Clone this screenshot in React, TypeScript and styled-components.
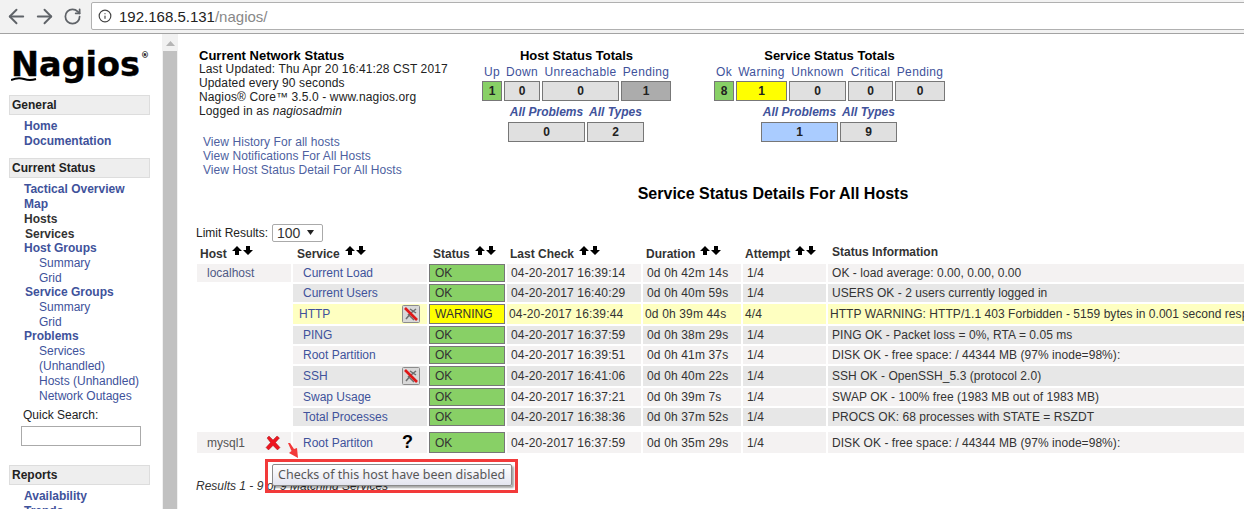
import React from 'react';

import { ArrowLeft, ArrowRight, Info, RotateCw } from 'lucide-react';
import styled, { createGlobalStyle } from 'styled-components';

const LINK_COLOR = '#40529b';
const TEXT_COLOR = '#333';

const GlobalStyle = createGlobalStyle`
  html, body {
    margin: 0;
    padding: 0;
    width: 1244px;
    height: 509px;
    overflow: hidden;
    background: #fff;
    font-family: "Liberation Sans", Arial, sans-serif;
    font-size: 12px;
    color: #000;
  }
`;

const Page = styled.div`
  position: relative;
  width: 1244px;
  height: 509px;
  overflow: hidden;
  display: flex;
  flex-direction: column;
`;

const Toolbar = styled.div`
  flex: 0 0 34px;
  box-sizing: border-box;
  height: 34px;
  display: flex;
  align-items: flex-start;
  background: #f2f2f2;
  border-bottom: 1px solid #a3a3a3;
  padding: 2px 0 0 2px;
  color: #5f6368;
`;

const NavButton = styled.div`
  width: 28px;
  height: 28px;
  display: flex;
  align-items: center;
  justify-content: center;
`;

const AddressBar = styled.div`
  box-sizing: border-box;
  flex: 1;
  margin: 0 -10px 0 5px;
  height: 28px;
  background: #fff;
  border: 1px solid #b0b0b0;
  border-radius: 2px;
  display: flex;
  align-items: center;
  padding-left: 6px;
  gap: 7px;
  font-size: 15px;
  color: #888;
`;

const Host = styled.span`
  color: #222;
`;

const Content = styled.div`
  flex: 1;
  display: flex;
  min-height: 0;
`;

const Sidebar = styled.div`
  flex: 0 0 162px;
  box-sizing: border-box;
  padding: 16px 12px 0 9px;
  overflow: hidden;
`;

const Logo = styled.div`
  position: relative;
  height: 45px;
  padding-left: 2px;
  font-family: "DejaVu Sans", sans-serif;
  font-weight: 700;
  font-size: 33.5px;
  line-height: 30px;
  color: #000;
  -webkit-text-stroke: 0.4px #000;
`;

const Registered = styled.sup`
  position: absolute;
  left: 132px;
  top: 2px;
  font-size: 8px;
  line-height: 8px;
  -webkit-text-stroke: 0;
`;

const Swoosh = styled.svg`
  position: absolute;
  left: 2px;
  top: 27px;
`;

const SectionHeader = styled.div`
  box-sizing: border-box;
  height: 20px;
  line-height: 18px;
  padding-left: 2px;
  background: #eee;
  border: 1px solid #ddd;
  font-weight: 700;
  color: #222;
  width: 141px;
`;

const NavList = styled.div<{ $isTight?: boolean }>`
  padding: 4px 0 0 15px;
  margin-bottom: ${(props) => (props.$isTight ? 0 : 9)}px;
`;

const NavItem = styled.div<{ $dark?: boolean; $nudge?: boolean; $short?: boolean }>`
  height: ${(props) => (props.$short ? 14 : 15)}px;
  line-height: 15px;
  font-weight: 700;
  white-space: nowrap;
  color: ${(props) => (props.$dark ? '#333' : LINK_COLOR)};
  padding-left: ${(props) => (props.$nudge ? 1 : 0)}px;
`;

const SubItem = styled.div<{ $short?: boolean }>`
  height: ${(props) => (props.$short ? 14 : 15)}px;
  line-height: 15px;
  padding-left: 15px;
  white-space: nowrap;
  color: ${LINK_COLOR};
`;

const SearchLabel = styled.div`
  padding: 4px 0 0 14px;
  line-height: 15px;
  color: #222;
`;

const SearchInput = styled.input`
  display: block;
  box-sizing: border-box;
  width: 120px;
  height: 20px;
  margin: 3px 0 19px 12px;
  border: 1px solid #aaa;
  background: #fff;
  padding: 0;
`;

const ScrollTrack = styled.div`
  flex: 0 0 16px;
  background: #f1f1f1;
  display: flex;
  flex-direction: column;
  align-items: center;
  padding-top: 7px;
  box-sizing: border-box;
`;

const ScrollArrow = styled.svg`
  display: block;
  margin-bottom: 5px;
`;

const ScrollThumb = styled.div`
  width: 14px;
  flex: 1;
  background: #c1c1c1;
`;

const Main = styled.div`
  flex: 1;
  min-width: 0;
  overflow: hidden;
  padding: 14px 0 0 18px;
`;

const TopSection = styled.div`
  display: flex;
  padding-left: 3px;
`;

const InfoColumn = styled.div`
  flex: 0 0 283px;
  line-height: 14px;
  letter-spacing: 0.12px;
  color: #222;
`;

const InfoTitle = styled.div`
  font-weight: 700;
  font-size: 13px;
  line-height: 16px;
  height: 14px;
  letter-spacing: 0;
  color: #000;
`;

const InfoLinks = styled.div`
  margin-top: 17px;
  padding-left: 4px;
  color: #4e5f9f;
  letter-spacing: 0.06px;
`;

const TotalsGroup = styled.div<{ $gap?: number }>`
  margin-left: ${(props) => props.$gap ?? 0}px;
  text-align: center;
`;

const TotalsTitle = styled.div`
  font-weight: 700;
  font-size: 13px;
  line-height: 16px;
  height: 14px;
  margin-bottom: 3px;
`;

const TotalsGrid = styled.div<{ $columns: string; $offset?: number }>`
  display: grid;
  grid-template-columns: ${(props) => props.$columns};
  column-gap: 2px;
  margin-left: ${(props) => props.$offset ?? 0}px;
`;

const TotalsLabel = styled.div<{ $italic?: boolean }>`
  color: ${LINK_COLOR};
  white-space: nowrap;
  line-height: 14px;
  font-style: ${(props) => (props.$italic ? 'italic' : 'normal')};
  font-weight: ${(props) => (props.$italic ? 700 : 400)};
  letter-spacing: ${(props) => (props.$italic ? 0 : 0.35)}px;
  margin-bottom: ${(props) => (props.$italic ? 3 : 2)}px;
  margin-top: ${(props) => (props.$italic ? 4 : 0)}px;
`;

const TotalsCell = styled.div<{ $color?: string }>`
  box-sizing: border-box;
  height: 20px;
  line-height: 18px;
  text-align: center;
  font-weight: 700;
  color: #222;
  background: ${(props) => props.$color ?? '#e0e0e0'};
  border: 1px solid #777;
`;

const PageTitle = styled.div`
  text-align: center;
  width: 1154px;
  font-size: 16px;
  font-weight: 700;
  line-height: 18px;
  margin-top: 8px;
`;

const LimitRow = styled.div`
  display: flex;
  align-items: center;
  gap: 4px;
  margin-top: 21px;
  height: 18px;
  color: #222;
`;

const LimitSelect = styled.div`
  position: relative;
  box-sizing: border-box;
  width: 51px;
  height: 18px;
  border: 1px solid #aaa;
  border-radius: 2px;
  padding-left: 4px;
  font-size: 14px;
  line-height: 16px;
  color: ${TEXT_COLOR};
`;

const SelectArrow = styled.svg`
  position: absolute;
  right: 7px;
  top: 5px;
`;

const Table = styled.div`
  width: 1060px;
  margin-top: 2px;
`;

const GRID_COLUMNS = '94px 134px 76px 134px 98px 83px 1fr';

const HeaderRow = styled.div`
  display: grid;
  grid-template-columns: ${GRID_COLUMNS};
  column-gap: 2px;
  height: 18px;
  margin-bottom: 2px;
  margin-left: 1px;
`;

const HeaderCell = styled.div<{ $indent?: number }>`
  border-bottom: 2px solid #777;
  box-sizing: border-box;
  font-weight: 700;
  color: #333;
  white-space: nowrap;
  line-height: 21px;
  padding-left: ${(props) => props.$indent ?? 3}px;
  display: flex;
  align-items: flex-start;
`;

const InfoHeaderCell = styled(HeaderCell)`
  line-height: 17px;
`;

const SortArrows = styled.svg`
  margin: 2px 0 0 5px;
  flex: none;
`;

const Row = styled.div<{ $height: number; $top: number }>`
  display: grid;
  grid-template-columns: ${GRID_COLUMNS};
  column-gap: 2px;
  height: ${(props) => props.$height}px;
  margin-top: ${(props) => props.$top}px;
  margin-left: 1px;
`;

const Cell = styled.div<{ $bg?: string; $indent: number }>`
  box-sizing: border-box;
  background: ${(props) => props.$bg ?? 'transparent'};
  padding-left: ${(props) => props.$indent}px;
  color: ${TEXT_COLOR};
  white-space: nowrap;
  overflow: hidden;
  display: flex;
  align-items: center;
  letter-spacing: 0.15px;
`;

const InfoCell = styled(Cell)`
  letter-spacing: 0.05px;
`;

const LinkCell = styled(Cell)`
  color: ${LINK_COLOR};
  justify-content: space-between;
  padding-right: 7px;
  letter-spacing: 0;
  overflow: visible;
`;

const StatusCell = styled.div<{ $warning: boolean }>`
  box-sizing: border-box;
  display: flex;
  align-items: center;
  background: ${(props) => (props.$warning ? '#ffff00' : '#88d066')};
  border: 1px solid #777;
  padding-left: 5px;
  color: ${TEXT_COLOR};
`;

const HostName = styled.span<{ $isDisabled: boolean }>`
  color: ${(props) => (props.$isDisabled ? '#555' : '#505a85')};
`;

const HostCell = styled(Cell)`
  justify-content: space-between;
  padding-right: 10px;
  overflow: visible;
  letter-spacing: 0;
`;

const QuestionMark = styled.span`
  color: #000;
  font-size: 18px;
  font-weight: 700;
  margin-right: 7px;
`;

const ResultsLine = styled.div`
  font-style: italic;
  margin-top: 27px;
  color: #333;
  line-height: 14px;
`;

const CalloutBox = styled.div`
  position: absolute;
  left: 265px;
  top: 459px;
  width: 253px;
  height: 34px;
  box-sizing: border-box;
  border: 3px solid #f23a3a;
`;

const Tooltip = styled.div`
  position: absolute;
  left: 272px;
  top: 464px;
  width: 240px;
  height: 22px;
  box-sizing: border-box;
  border: 1px solid #8a8a8a;
  border-radius: 2px;
  background: linear-gradient(#ffffff, #e4e5f0);
  box-shadow: 2px 2px 2px rgba(0, 0, 0, 0.35);
  font-family: "Noto Sans", sans-serif;
  font-size: 12.5px;
  line-height: 19px;
  padding-left: 5px;
  color: #575757;
  white-space: nowrap;
`;

const CalloutArrow = styled.svg`
  position: absolute;
  left: 286px;
  top: 443px;
`;

const SortIcon = (): React.ReactElement => (
  <SortArrows width="22" height="10" viewBox="0 0 22 10">
    <path d="M5 0 L10 5 L7 5 L7 9 L3 9 L3 5 L0 5 Z" fill="#000" />
    <path d="M14 0 L18 0 L18 4 L21 4 L16 9 L11 4 L14 4 Z" fill="#000" />
  </SortArrows>
);

const DisabledIcon = (): React.ReactElement => (
  <svg width="18" height="18" viewBox="0 0 18 18">
    <rect x="0.5" y="0.5" width="17" height="17" rx="1" fill="#d8d8d8" stroke="#8c8c8c" />
    <path d="M4 14 L9 8 L14 4 M8 4 L14 8 M6 9 L12 15" stroke="#6e6e6e" strokeWidth="1.5" fill="none" />
    <path d="M3 3 L15 15" stroke="#e01818" strokeWidth="2.6" />
  </svg>
);

const CrossIcon = (): React.ReactElement => (
  <svg width="16" height="16" viewBox="0 0 16 16">
    <path d="M2 3 L4 1 L8 5 L12 1 L14.5 3 L10.5 7.5 L15 12.5 L12.5 15 L8 10.5 L3.5 15 L1 12.5 L5.5 7.5 Z" fill="#ee1520" stroke="#8a1010" strokeWidth="0.4" />
  </svg>
);

interface IServiceRow {
  host?: string;
  service: string;
  status: string;
  lastCheck: string;
  duration: string;
  attempt: string;
  info: string;
  icon?: 'disabled' | 'unknown';
  height: number;
  top: number;
}

const ROWS: IServiceRow[] = [
  { host: 'localhost', service: 'Current Load', status: 'OK', lastCheck: '04-20-2017 16:39:14', duration: '0d 0h 42m 14s', attempt: '1/4', info: 'OK - load average: 0.00, 0.00, 0.00', height: 18, top: 0 },
  { service: 'Current Users', status: 'OK', lastCheck: '04-20-2017 16:40:29', duration: '0d 0h 40m 59s', attempt: '1/4', info: 'USERS OK - 2 users currently logged in', height: 18, top: 2 },
  { service: 'HTTP', status: 'WARNING', lastCheck: '04-20-2017 16:39:44', duration: '0d 0h 39m 44s', attempt: '4/4', info: 'HTTP WARNING: HTTP/1.1 403 Forbidden - 5159 bytes in 0.001 second response time', icon: 'disabled', height: 20, top: 2 },
  { service: 'PING', status: 'OK', lastCheck: '04-20-2017 16:37:59', duration: '0d 0h 38m 29s', attempt: '1/4', info: 'PING OK - Packet loss = 0%, RTA = 0.05 ms', height: 18, top: 2 },
  { service: 'Root Partition', status: 'OK', lastCheck: '04-20-2017 16:39:51', duration: '0d 0h 41m 37s', attempt: '1/4', info: 'DISK OK - free space: / 44344 MB (97% inode=98%):', height: 18, top: 2 },
  { service: 'SSH', status: 'OK', lastCheck: '04-20-2017 16:41:06', duration: '0d 0h 40m 22s', attempt: '1/4', info: 'SSH OK - OpenSSH_5.3 (protocol 2.0)', icon: 'disabled', height: 20, top: 2 },
  { service: 'Swap Usage', status: 'OK', lastCheck: '04-20-2017 16:37:21', duration: '0d 0h 39m 7s', attempt: '1/4', info: 'SWAP OK - 100% free (1983 MB out of 1983 MB)', height: 18, top: 2 },
  { service: 'Total Processes', status: 'OK', lastCheck: '04-20-2017 16:38:36', duration: '0d 0h 37m 52s', attempt: '1/4', info: 'PROCS OK: 68 processes with STATE = RSZDT', height: 18, top: 2 },
  { host: 'mysql1', service: 'Root Partiton', status: 'OK', lastCheck: '04-20-2017 16:37:59', duration: '0d 0h 35m 29s', attempt: '1/4', info: 'DISK OK - free space: / 44344 MB (97% inode=98%):', icon: 'unknown', height: 20, top: 6 },
];

const getRowBackground = (index: number, isWarning: boolean): string => {
  if (isWarning) {
    return '#feffc1';
  }
  return index % 2 === 0 ? '#f4f2f2' : '#e7e7e7';
};

const ServiceRow = (props: { row: IServiceRow; index: number }): React.ReactElement => {
  const { row } = props;
  const isWarning = row.status === 'WARNING';
  // the last row is the first service of its host, so it restarts on the light colour
  const background = getRowBackground(row.host === 'mysql1' ? 0 : props.index, isWarning);
  const shift = isWarning ? 2 : 0;
  return (
    <Row $height={row.height} $top={row.top}>
      {row.host ? (
        <HostCell $bg="#f4f2f2" $indent={10}>
          <HostName $isDisabled={row.host === 'mysql1'}>{row.host}</HostName>
          {row.host === 'mysql1' && <CrossIcon />}
        </HostCell>
      ) : <Cell $indent={0} />}
      <LinkCell $bg={background} $indent={isWarning ? 6 : 10}>
        {row.service}
        {row.icon === 'disabled' && <DisabledIcon />}
        {row.icon === 'unknown' && <QuestionMark>?</QuestionMark>}
      </LinkCell>
      <StatusCell $warning={isWarning}>{row.status}</StatusCell>
      <Cell $bg={background} $indent={4 - shift}>{row.lastCheck}</Cell>
      <Cell $bg={background} $indent={4 - shift}>{row.duration}</Cell>
      <Cell $bg={background} $indent={4 - shift}>{row.attempt}</Cell>
      <InfoCell $bg={background} $indent={4 - shift}>{row.info}</InfoCell>
    </Row>
  );
};

const App = (): React.ReactElement => {
  return (
    <Page>
      <GlobalStyle />
      <Toolbar>
        <NavButton><ArrowLeft size={23} strokeWidth={2} /></NavButton>
        <NavButton><ArrowRight size={23} strokeWidth={2} /></NavButton>
        <NavButton><RotateCw size={19} strokeWidth={2.2} /></NavButton>
        <AddressBar>
          <Info size={14} strokeWidth={2} color="#444" />
          <span><Host>192.168.5.131</Host>/nagios/</span>
        </AddressBar>
      </Toolbar>
      <Content>
        <Sidebar>
          <Logo>
            Nagios
            <Registered>®</Registered>
            <Swoosh width="26" height="5" viewBox="0 0 26 5">
              <path d="M0 3 Q7 0 13 2 T25 2" stroke="#000" strokeWidth="2" fill="none" />
            </Swoosh>
          </Logo>
          <SectionHeader>General</SectionHeader>
          <NavList>
            <NavItem>Home</NavItem>
            <NavItem>Documentation</NavItem>
          </NavList>
          <SectionHeader>Current Status</SectionHeader>
          <NavList $isTight>
            <NavItem>Tactical Overview</NavItem>
            <NavItem>Map</NavItem>
            <NavItem $dark>Hosts</NavItem>
            <NavItem $dark $nudge $short>Services</NavItem>
            <NavItem>Host Groups</NavItem>
            <SubItem>Summary</SubItem>
            <SubItem $short>Grid</SubItem>
            <NavItem $nudge>Service Groups</NavItem>
            <SubItem>Summary</SubItem>
            <SubItem $short>Grid</SubItem>
            <NavItem>Problems</NavItem>
            <SubItem>Services</SubItem>
            <SubItem>(Unhandled)</SubItem>
            <SubItem>Hosts (Unhandled)</SubItem>
            <SubItem>Network Outages</SubItem>
          </NavList>
          <SearchLabel>Quick Search:</SearchLabel>
          <SearchInput />
          <SectionHeader>Reports</SectionHeader>
          <NavList>
            <NavItem>Availability</NavItem>
            <NavItem>Trends</NavItem>
          </NavList>
        </Sidebar>
        <ScrollTrack>
          <ScrollArrow width="9" height="5" viewBox="0 0 9 5">
            <path d="M4.5 0 L9 5 L0 5 Z" fill="#b5b5b5" />
          </ScrollArrow>
          <ScrollThumb />
        </ScrollTrack>
        <Main>
          <TopSection>
            <InfoColumn>
              <InfoTitle>Current Network Status</InfoTitle>
              <div>Last Updated: Thu Apr 20 16:41:28 CST 2017</div>
              <div>Updated every 90 seconds</div>
              <div>Nagios® Core™ 3.5.0 - www.nagios.org</div>
              <div>Logged in as <i>nagiosadmin</i></div>
              <InfoLinks>
                <div>View History For all hosts</div>
                <div>View Notifications For All Hosts</div>
                <div>View Host Status Detail For All Hosts</div>
              </InfoLinks>
            </InfoColumn>
            <TotalsGroup>
              <TotalsTitle>Host Status Totals</TotalsTitle>
              <TotalsGrid $columns="20px 36px 77px 50px">
                <TotalsLabel>Up</TotalsLabel>
                <TotalsLabel>Down</TotalsLabel>
                <TotalsLabel>Unreachable</TotalsLabel>
                <TotalsLabel>Pending</TotalsLabel>
                <TotalsCell $color="#88d066">1</TotalsCell>
                <TotalsCell>0</TotalsCell>
                <TotalsCell>0</TotalsCell>
                <TotalsCell $color="#acacac">1</TotalsCell>
              </TotalsGrid>
              <TotalsGrid $columns="77px 57px" $offset={26}>
                <TotalsLabel $italic>All Problems</TotalsLabel>
                <TotalsLabel $italic>All Types</TotalsLabel>
                <TotalsCell>0</TotalsCell>
                <TotalsCell>2</TotalsCell>
              </TotalsGrid>
            </TotalsGroup>
            <TotalsGroup $gap={43}>
              <TotalsTitle>Service Status Totals</TotalsTitle>
              <TotalsGrid $columns="20px 51px 57px 45px 50px">
                <TotalsLabel>Ok</TotalsLabel>
                <TotalsLabel>Warning</TotalsLabel>
                <TotalsLabel>Unknown</TotalsLabel>
                <TotalsLabel>Critical</TotalsLabel>
                <TotalsLabel>Pending</TotalsLabel>
                <TotalsCell $color="#88d066">8</TotalsCell>
                <TotalsCell $color="#ffff00">1</TotalsCell>
                <TotalsCell>0</TotalsCell>
                <TotalsCell>0</TotalsCell>
                <TotalsCell>0</TotalsCell>
              </TotalsGrid>
              <TotalsGrid $columns="77px 57px" $offset={47}>
                <TotalsLabel $italic>All Problems</TotalsLabel>
                <TotalsLabel $italic>All Types</TotalsLabel>
                <TotalsCell $color="#aaccff">1</TotalsCell>
                <TotalsCell>9</TotalsCell>
              </TotalsGrid>
            </TotalsGroup>
          </TopSection>
          <PageTitle>Service Status Details For All Hosts</PageTitle>
          <LimitRow>
            Limit Results:
            <LimitSelect>
              100
              <SelectArrow width="9" height="6" viewBox="0 0 9 6">
                <path d="M1 0 L8 0 L4.5 5 Z" fill="#222" />
              </SelectArrow>
            </LimitSelect>
          </LimitRow>
          <Table>
            <HeaderRow>
              <HeaderCell>Host<SortIcon /></HeaderCell>
              <HeaderCell $indent={4}>Service<SortIcon /></HeaderCell>
              <HeaderCell $indent={4}>Status<SortIcon /></HeaderCell>
              <HeaderCell>Last Check<SortIcon /></HeaderCell>
              <HeaderCell>Duration<SortIcon /></HeaderCell>
              <HeaderCell $indent={2}>Attempt<SortIcon /></HeaderCell>
              <InfoHeaderCell $indent={4}>Status Information</InfoHeaderCell>
            </HeaderRow>
            {ROWS.map((row, index) => (
              <ServiceRow key={`${row.service}-${index}`} row={row} index={index} />
            ))}
          </Table>
          <ResultsLine>Results 1 - 9 of 9 Matching Services</ResultsLine>
        </Main>
      </Content>
      <CalloutArrow width="14" height="18" viewBox="0 0 14 18">
        <path d="M2 0 L4 0 L8 6 L11 5 L12 15 L3 10 L5.5 8 Z" fill="#f23a3a" />
      </CalloutArrow>
      <CalloutBox />
      <Tooltip>Checks of this host have been disabled</Tooltip>
    </Page>
  );
};

export default App;
